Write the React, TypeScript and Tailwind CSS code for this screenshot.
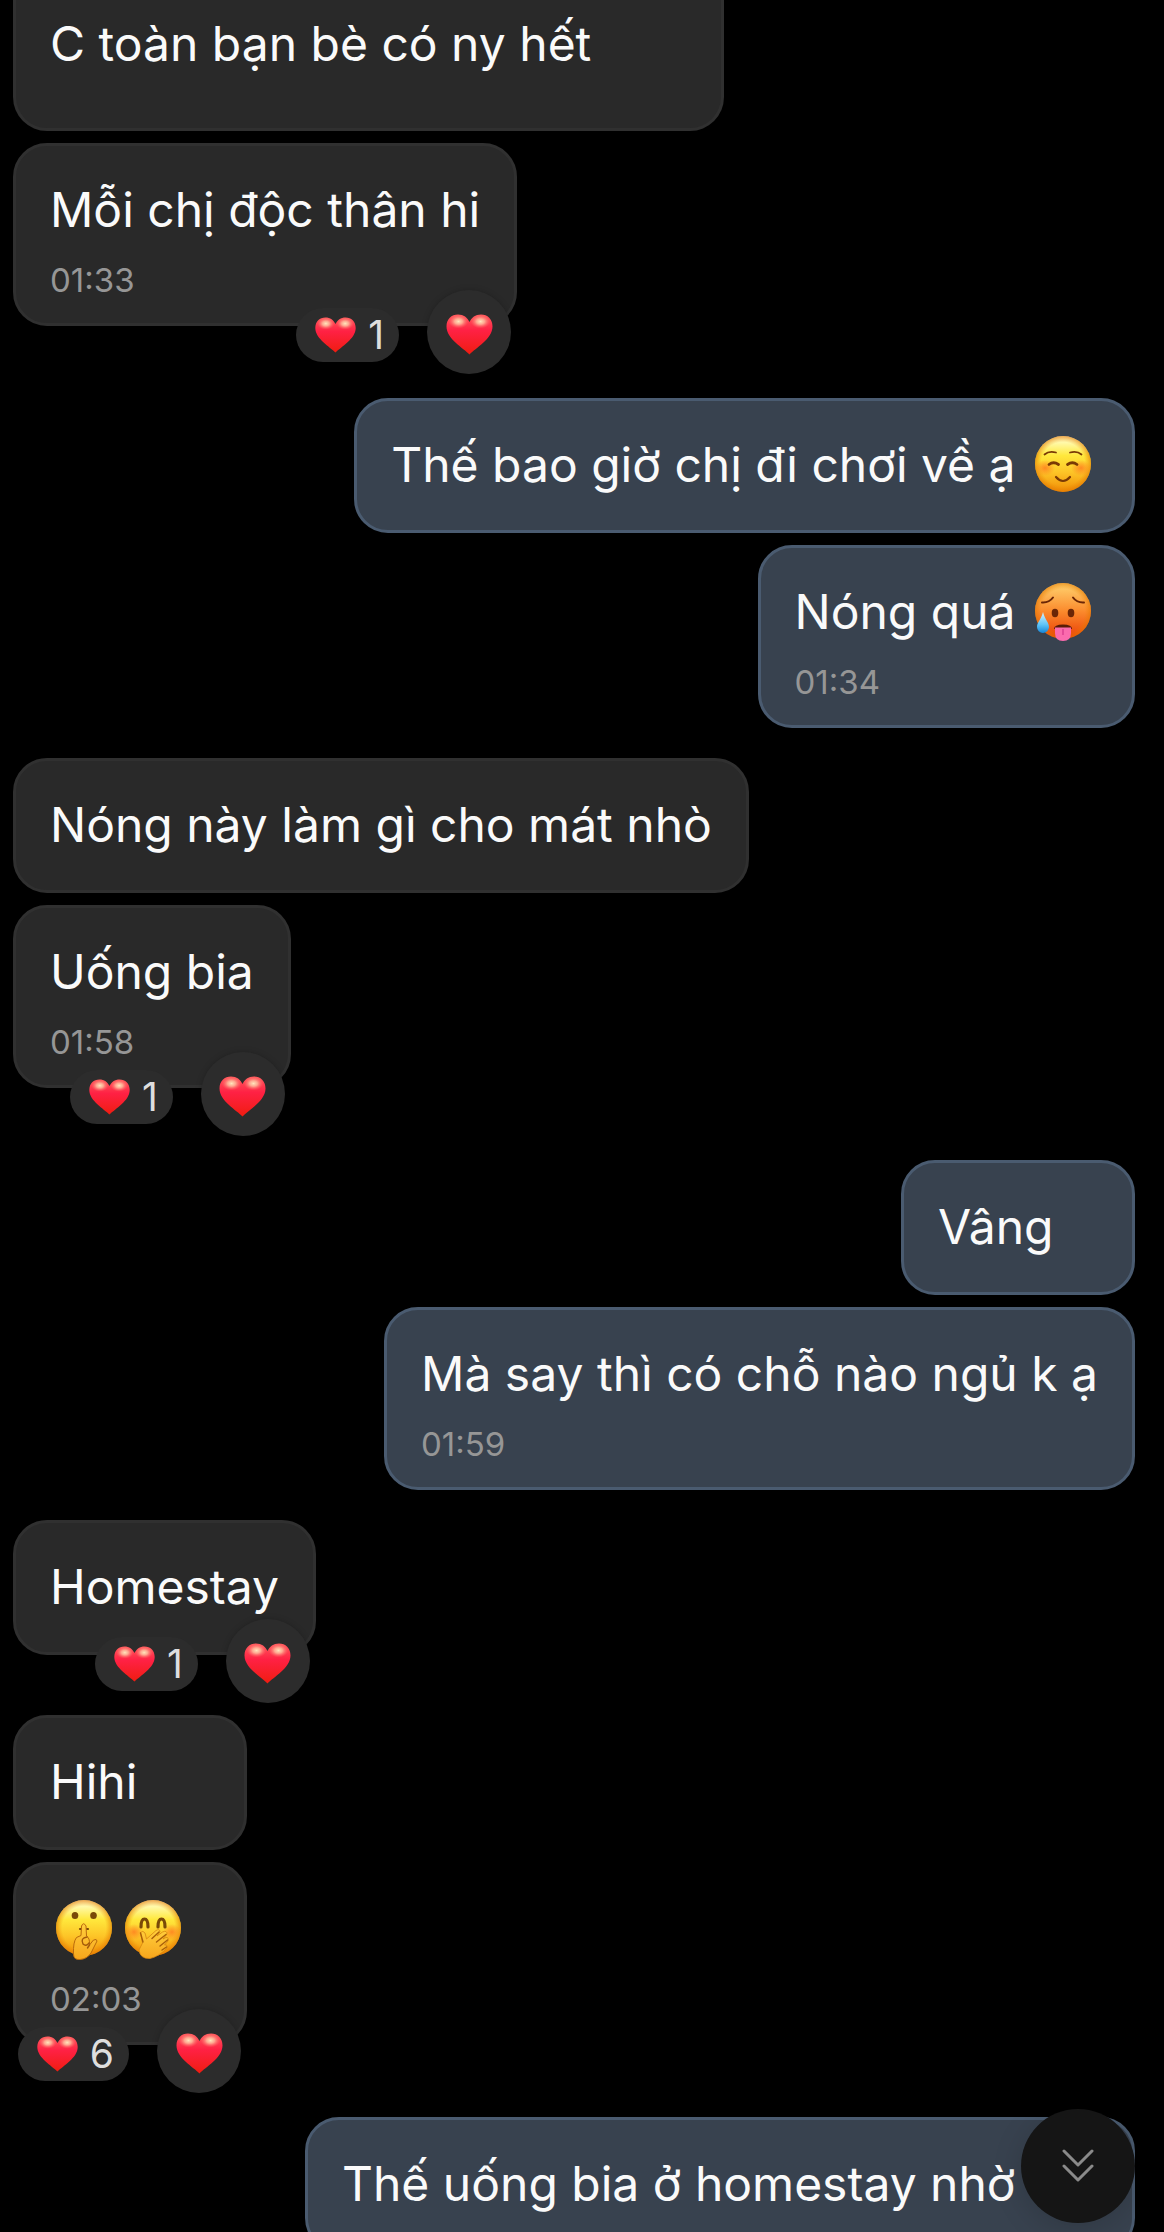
import * as React from "react";

type EmojiName = "smile" | "hot" | "shush" | "giggle";

interface Message {
    id: number;
    mine?: boolean;
    text?: string;
    emojis?: EmojiName[];
    time?: string;
    likes?: number;
}

const messages: Message[] = [
    { id: 1, text: "Mỗi chị độc thân hi", time: "01:33", likes: 1 },
    { id: 2, mine: true, text: "Thế bao giờ chị đi chơi về ạ", emojis: ["smile"] },
    { id: 3, mine: true, text: "Nóng quá", emojis: ["hot"], time: "01:34" },
    { id: 4, text: "Nóng này làm gì cho mát nhò" },
    { id: 5, text: "Uống bia", time: "01:58", likes: 1 },
    { id: 6, mine: true, text: "Vâng" },
    { id: 7, mine: true, text: "Mà say thì có chỗ nào ngủ k ạ", time: "01:59" },
    { id: 8, text: "Homestay", likes: 1 },
    { id: 9, text: "Hihi" },
    { id: 10, emojis: ["shush", "giggle"], time: "02:03", likes: 6 },
    { id: 11, mine: true, text: "Thế uống bia ở homestay nhờ", emojis: ["smile"] },
];

function Gradients() {
    return (
        <svg className="absolute w-0 h-0" aria-hidden="true">
            <defs>
                <linearGradient id="skin" x1="0" y1="0" x2="0" y2="1">
                    <stop offset="0" stopColor="#fff3c0" />
                    <stop offset="0.12" stopColor="#fff9a8" />
                    <stop offset="0.35" stopColor="#ffe83c" />
                    <stop offset="0.65" stopColor="#fdc427" />
                    <stop offset="1" stopColor="#f08c05" />
                </linearGradient>
                <linearGradient id="hotSkin" x1="0" y1="0" x2="0" y2="1">
                    <stop offset="0" stopColor="#ffd471" />
                    <stop offset="0.5" stopColor="#fb8b2d" />
                    <stop offset="1" stopColor="#e93b05" />
                </linearGradient>
                <radialGradient id="cheek">
                    <stop offset="0" stopColor="#ff7a1f" stopOpacity="0.8" />
                    <stop offset="1" stopColor="#ff7a1f" stopOpacity="0" />
                </radialGradient>
                <radialGradient id="rim">
                    <stop offset="0.78" stopColor="#ea8400" stopOpacity="0" />
                    <stop offset="1" stopColor="#e07400" stopOpacity="0.6" />
                </radialGradient>
                <linearGradient id="hand" x1="0" y1="0" x2="0" y2="1">
                    <stop offset="0" stopColor="#ffce3c" />
                    <stop offset="1" stopColor="#f7a61c" />
                </linearGradient>
                <linearGradient id="drop" x1="0" y1="0" x2="0" y2="1">
                    <stop offset="0" stopColor="#d5f4ff" />
                    <stop offset="0.6" stopColor="#5fc4f7" />
                    <stop offset="1" stopColor="#1586d8" />
                </linearGradient>
                <linearGradient id="heart" x1="0" y1="0" x2="0" y2="1">
                    <stop offset="0" stopColor="#ff5a5c" />
                    <stop offset="0.4" stopColor="#ff2144" />
                    <stop offset="1" stopColor="#f01c10" />
                </linearGradient>
                <radialGradient id="shine">
                    <stop offset="0" stopColor="#ffe6bd" />
                    <stop offset="0.4" stopColor="#ffc3a0" stopOpacity="0.8" />
                    <stop offset="1" stopColor="#ff6a6a" stopOpacity="0" />
                </radialGradient>
            </defs>
        </svg>
    );
}

function Heart({ className }: { className: string }) {
    return (
        <svg viewBox="0 0 46 41" className={className} aria-hidden="true">
            <path d="M23 40.500C17 34 0 25 0 12.500 0 5 5 .5 11.500 .5 17 .5 21 3.500 23 8 25 3.500 29 .5 34.500 .5 41 .5 46 5 46 12.500 46 25 29 34 23 40.500Z" fill="url(#heart)" />
            <ellipse cx="12" cy="7.500" rx="10" ry="7" fill="url(#shine)" />
            <ellipse cx="34" cy="7.500" rx="10" ry="7" fill="url(#shine)" />
        </svg>
    );
}

const emojiLabels = { smile: "☺️", hot: "🥵", shush: "🤫", giggle: "🤭" };

function Emoji({ name }: { name: EmojiName }) {
    return (
        <svg viewBox="-6 -2 69 62" className="inline-block w-[69px] h-[62px] shrink-0" role="img" aria-label={emojiLabels[name]}>
            <circle cx="28" cy="28" r="28" fill={name === "hot" ? "url(#hotSkin)" : "url(#skin)"} />
            <circle cx="28" cy="28" r="28" fill="url(#rim)" />
            {name === "smile" && (
                <g fill="none" stroke="#7a3a05" strokeLinecap="round">
                    <ellipse cx="10" cy="32" rx="10" ry="8" fill="url(#cheek)" stroke="none" />
                    <ellipse cx="46" cy="32" rx="10" ry="8" fill="url(#cheek)" stroke="none" />
                    <path d="M9.500 18.500Q14 14.500 21 16.500M35 16.500Q42 14.500 46.500 18.500" strokeWidth="1.800" />
                    <path d="M14 28.500Q18.500 25 23.500 28.500M32.500 28.500Q37.500 25 42 28.500" strokeWidth="2.800" />
                    <path d="M21 41Q28 49 35 41" strokeWidth="2.200" />
                </g>
            )}
            {name === "hot" && (
                <g>
                    <path d="M7 19.500Q14 20 18 14.500M49 19.500Q42 20 38 14.500" fill="none" stroke="#6b2606" strokeWidth="2" strokeLinecap="round" />
                    <ellipse cx="20" cy="30" rx="3.300" ry="4.200" fill="#6b2606" />
                    <ellipse cx="36" cy="30" rx="3.300" ry="4.200" fill="#6b2606" />
                    <path d="M19 46Q19 41.500 28 41.500 37 41.500 37 46Z" fill="#5a1d06" />
                    <path d="M20 44.500H36V50Q36 58 28 58 20 58 20 50Z" fill="#fb6bae" />
                    <path d="M28 46V52" stroke="#dc4190" strokeWidth="1.500" />
                    <path d="M8 29C10 37 14 39 14 44A6 6 0 0 1 2 44C2 39 6 37 8 29Z" fill="url(#drop)" />
                </g>
            )}
            {name === "shush" && (
                <g>
                    <ellipse cx="19" cy="15.500" rx="3.300" ry="3.500" fill="#7a4a08" />
                    <ellipse cx="37.500" cy="15.500" rx="3.300" ry="3.500" fill="#7a4a08" />
                    <path d="M24 29H32" stroke="#7a4a08" strokeWidth="2.200" strokeLinecap="round" />
                    <path d="M25.500 26Q27.500 21.500 30 26L30.500 36Q34 38 33.500 45L37.500 40Q41 38.500 41 41L35 53Q31 59 24 59.500 17.500 60 17.500 54 17 42 20.500 37.500L25 35.500Z" fill="url(#hand)" stroke="#b9690b" strokeWidth="1" />
                    <path d="M31 37Q24 38 27 44 30 47 33 43M33.500 45L31.500 48" fill="none" stroke="#a3590a" strokeWidth="1.400" strokeLinecap="round" />
                </g>
            )}
            {name === "giggle" && (
                <g>
                    <ellipse cx="9" cy="32" rx="9" ry="8" fill="url(#cheek)" />
                    <ellipse cx="47" cy="32" rx="9" ry="8" fill="url(#cheek)" />
                    <path d="M16 27Q16 19 19.500 19T23 27M33 27Q33 19 36.500 19T40 27" fill="none" stroke="#7a4a08" strokeWidth="3.200" strokeLinecap="round" />
                    <path d="M15.500 32.500Q18 30 20 33L21.500 39 31 30.500Q34.500 28.500 35 31.500L32 36 37.500 32Q42 30 42 34L38 39 41 37.500Q44 37 43 41L39.500 45Q43 44.500 42 48 34 56.500 25 58.500 15 59 14 50L17.500 43Z" fill="url(#hand)" stroke="#d58510" strokeWidth="0.800" />
                    <path d="M27 38.500L34 32M31.500 42L41 34.500M35 46L42.500 40M37 50L41.500 47M15.500 33L18 42" stroke="#a85f0a" strokeWidth="1.400" strokeLinecap="round" />
                </g>
            )}
        </svg>
    );
}

function Reactions({ likes }: { likes: number }) {
    return (
        <div className="absolute right-[3px] -bottom-[51px] flex items-center gap-7">
            <button type="button" className="mt-1.5 flex h-[54px] items-center gap-3 rounded-full bg-[#2c2c2c] pl-[19px] pr-[15px] text-[39px] leading-[54px] text-[#dedede]">
                <Heart className="w-[41px] h-9" />
                {likes}
            </button>
            <button type="button" aria-label="❤️" className="flex size-[84px] items-center justify-center rounded-full bg-[#2c2c2c] pt-1 shadow-[0_0_6px_rgba(0,0,0,0.2)]">
                <Heart className="w-[47px] h-[41px]" />
            </button>
        </div>
    );
}

function Bubble({ message }: { message: Message }) {
    const { mine, text, emojis, time, likes } = message;
    return (
        <div
            className={`relative w-fit min-w-[234px] rounded-[34px] border-[3px] px-[34px] pt-[34px] ${time ? "pb-[23px]" : "pb-[35px]"} ${
                mine ? "self-end border-[#4a5b70] bg-[#38424f]" : "self-start border-[#303030] bg-[#292929]"
            }`}
        >
            <p className="flex h-[60px] items-center whitespace-pre text-5xl leading-[60px] text-[#fafafa]">
                {text}
                {text && emojis ? " " : ""}
                {emojis?.map((name) => <Emoji key={name} name={name} />)}
            </p>
            {time && <time className="mt-5 block text-[33px] leading-10 text-[#969696]">{time}</time>}
            {likes && <Reactions likes={likes} />}
        </div>
    );
}

// space above a message: tight inside one sender's run, wider when the sender changes
function gapAbove(prev: Message | undefined, message: Message) {
    if (!prev) return "mt-3";
    const sameSender = !!prev.mine === !!message.mine;
    if (prev.likes) return sameSender ? "mt-[60px]" : "mt-[72px]";
    return sameSender ? "mt-3" : "mt-[30px]";
}

export default function App() {
    return (
        <main className="flex h-screen flex-col overflow-hidden bg-black pl-[13px] pr-[29px] font-['Inter',sans-serif]">
            <Gradients />
            <div className="w-fit min-w-[711px] shrink-0 self-start rounded-b-[34px] border-[3px] border-t-0 border-[#303030] bg-[#292929] px-[34px] pt-[14px] pb-[54px]">
                <p className="text-5xl leading-[60px] text-[#fafafa]">C toàn bạn bè có ny hết</p>
            </div>
            {messages.map((message, index) => (
                <div key={message.id} className={`flex shrink-0 flex-col ${gapAbove(messages[index - 1], message)}`}>
                    <Bubble message={message} />
                </div>
            ))}
            <button type="button" aria-label="Cuộn xuống" className="fixed right-[29px] bottom-[9px] flex size-[114px] items-center justify-center rounded-full bg-[#151515] shadow-[0_6px_30px_rgba(0,0,0,0.15)]">
                <svg viewBox="0 0 32 34" className="w-8 h-[34px]" fill="none" stroke="#8a8a8a" strokeWidth="3" strokeLinecap="round" strokeLinejoin="round" aria-hidden="true">
                    <path d="M2 2L16 16 30 2M2 17L16 31 30 17" />
                </svg>
            </button>
        </main>
    );
}
